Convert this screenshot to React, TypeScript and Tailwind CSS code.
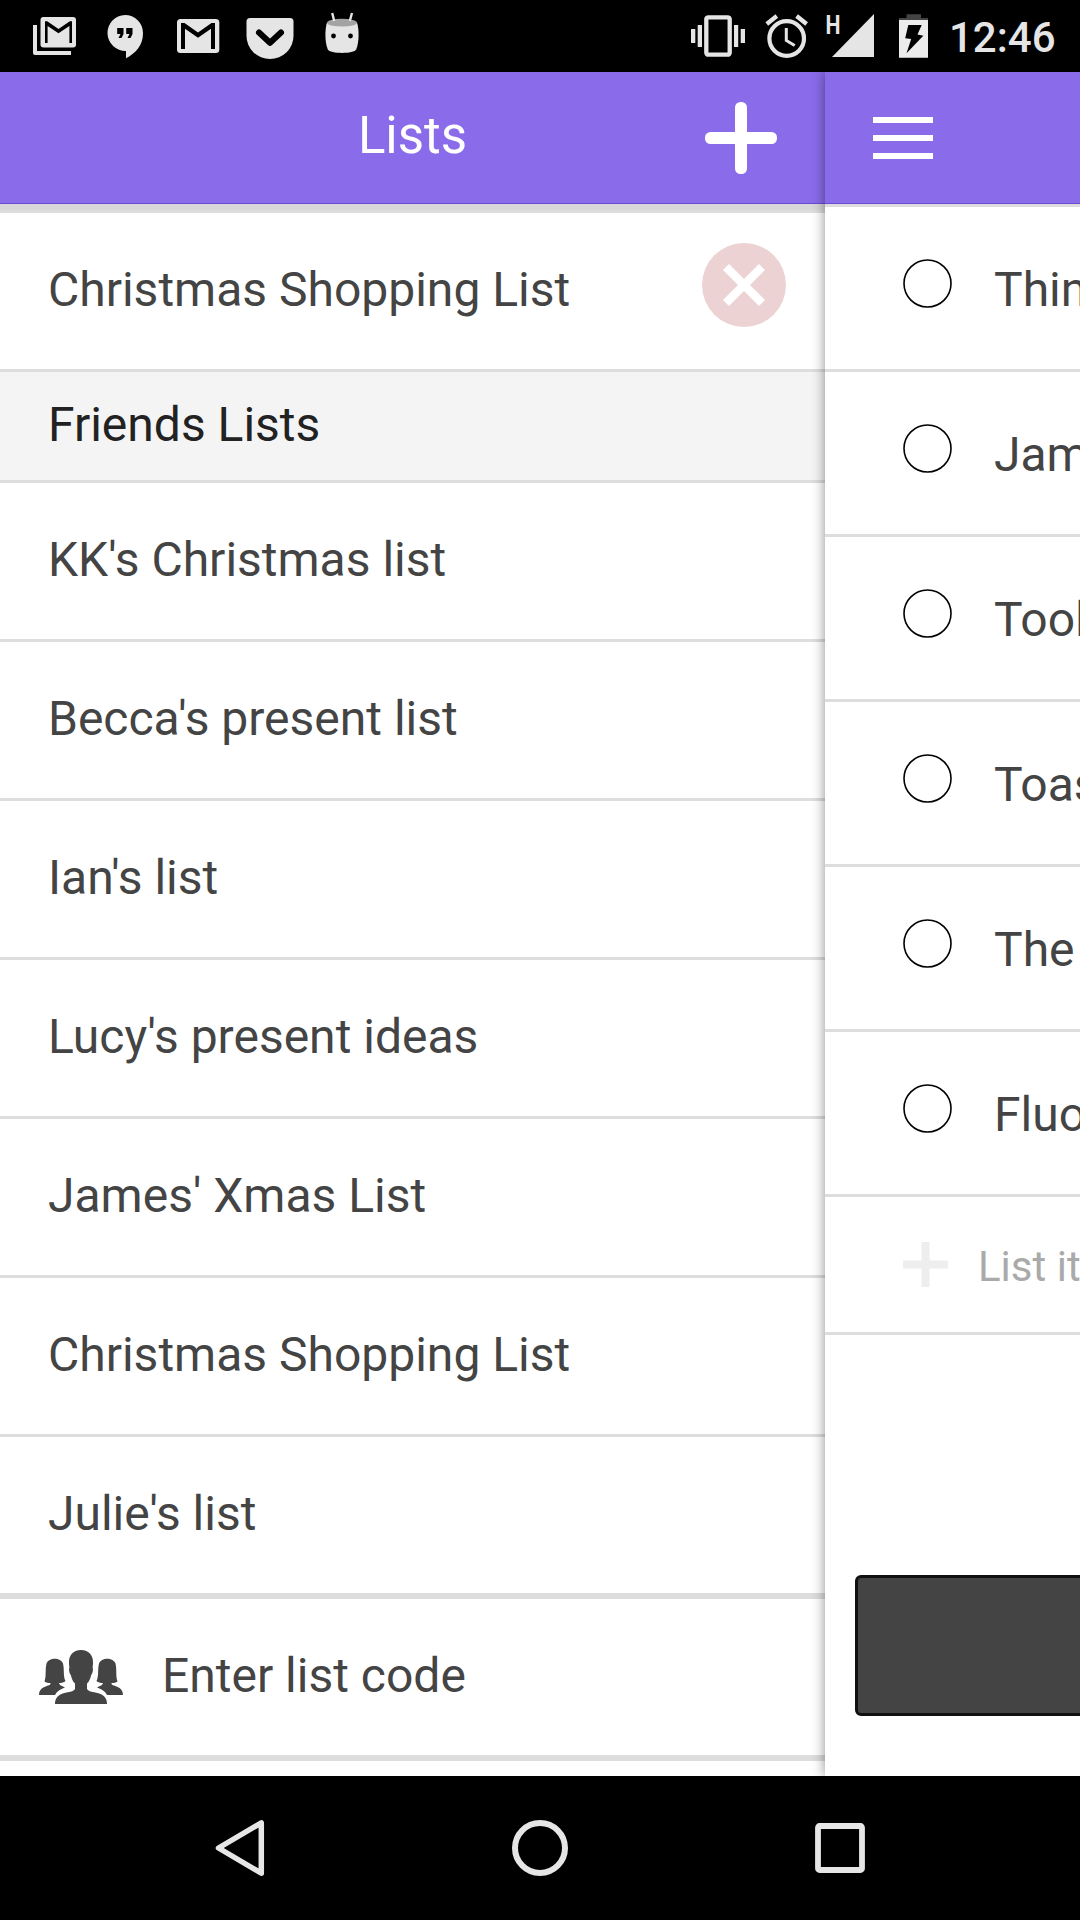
const friendLists = [
  "KK's Christmas list",
  "Becca's present list",
  "Ian's list",
  "Lucy's present ideas",
  "James' Xmas List",
  'Christmas Shopping List',
];

const items = ['Thin', 'Jam', 'Tool', 'Toas', 'The', 'Fluo'];

function StatusBar() {
  return (
    <div className="flex h-[72px] items-center bg-black pl-[30px] pr-6 text-[#e5e5e5]">
      <svg className="h-[72px] w-[50px]" viewBox="30 0 50 72">
        <path d="M33 25h4v26h34v4H35a2 2 0 0 1-2-2z" fill="currentColor" />
        <rect x="40.5" y="17" width="35.5" height="30.5" rx="3" fill="currentColor" />
        <path d="M45 43V21.2h2.2L58.5 29 69.8 21.2H72V43h-2.6V26L58.5 33.2 47.6 26V43z" fill="#000" />
      </svg>
      <svg className="ml-6 h-[72px] w-[44px]" viewBox="104 0 44 72">
        <path d="M125 15a18 18 0 1 0 1 36v7.3c10-5.300 17-13 17-25.300a18 18 0 0 0-18-18z" fill="currentColor" />
        <path d="M117.200 28h6.300v6l-2 4h-3l2-4h-3.300zM126.200 28h6.300v6l-2 4h-3l2-4h-3.300z" fill="#000" />
      </svg>
      <svg className="ml-6 h-[72px] w-[50px]" viewBox="172 0 50 72">
        <rect x="177" y="19" width="42.300" height="34" rx="3.500" fill="currentColor" />
        <path d="M181 49V23h3.500L198 32.500 211.500 23H215v26h-4V28.800L198 37.800 185 28.800V49z" fill="#000" />
      </svg>
      <svg className="ml-[18px] h-[72px] w-[60px]" viewBox="240 0 60 72">
        <path d="M250 18h40a3.500 3.500 0 0 1 3.500 3.500V36a23.500 23 0 0 1-47 0V21.500A3.500 3.500 0 0 1 250 18z" fill="currentColor" />
        <path d="M259 32.500l11 10.300 11-10.300" fill="none" stroke="#000" strokeWidth="6" strokeLinecap="round" strokeLinejoin="round" />
      </svg>
      <svg className="ml-5 h-[72px] w-[44px]" viewBox="320 0 44 72">
        <path d="M327 22.500c-2 6-2.500 19 .8 27 2 4.500 26.400 4.500 28.400 0 3.300-8 2.800-21 .8-27z" fill="currentColor" />
        <ellipse cx="342" cy="22.700" rx="15" ry="3.900" fill="#a3a3a3" />
        <path d="M334.200 21l-2-8M349.800 21l2.200-8" stroke="currentColor" strokeWidth="2.400" />
        <circle cx="333.500" cy="36" r="2.400" fill="#000" />
        <circle cx="350.500" cy="36" r="2.400" fill="#000" />
      </svg>
      <svg className="ml-auto h-[72px] w-[56px]" viewBox="690 0 56 72">
        <rect x="706.300" y="17.300" width="23.400" height="37.400" rx="2" fill="none" stroke="currentColor" strokeWidth="4.300" />
        <path d="M691 29h4.300v14H691zM697.700 25h4.300v22h-4.300zM734 25h4.200v22H734zM740.700 29h4.300v14h-4.300z" fill="currentColor" />
      </svg>
      <svg className="ml-[18px] h-[72px] w-[46px]" viewBox="764 0 46 72">
        <circle cx="786.700" cy="38.500" r="17.300" fill="none" stroke="currentColor" strokeWidth="4.200" />
        <path d="M786.300 28v12.500l8.400 5" fill="none" stroke="currentColor" strokeWidth="3" />
        <path d="M766.800 24l10-8M796.600 16l10 8" stroke="currentColor" strokeWidth="4.300" />
      </svg>
      <svg className="ml-3 h-[72px] w-[56px]" viewBox="822 0 56 72">
        <path d="M832 57l42-43v43z" fill="currentColor" />
        <text x="825.500" y="33.500" textLength="15" lengthAdjust="spacingAndGlyphs" fontSize="25.500" fontWeight="700" fill="currentColor">H</text>
      </svg>
      <svg className="ml-[18px] h-[72px] w-[34px]" viewBox="896 0 34 72">
        <path d="M906.500 14.300H921V18h7v2h-29v-2h7.500z" fill="#444" />
        <path d="M899 20h29v37.700h-29z" fill="#ececec" />
        <path d="M908.300 25h13.400L917.500 34.500l5.800 1.200-16.800 17.600 4.700-14.300-6-.8z" fill="#000" />
      </svg>
      <span className="ml-[19px] w-[107px] self-start whitespace-nowrap text-[42px] font-medium leading-[75px]">12:46</span>
    </div>
  );
}

function GroupIcon() {
  return (
    <svg className="h-[54px] w-[84px] text-[#444]" viewBox="0 0 84 54" fill="currentColor">
      <path d="M5.500 31.500C7.500 26 6 19 7.500 13.500 9.500 7 22 7 24 13.500c1.500 5.500 0 13 2.500 17.500-1.500 1.500-4 2-6.500 2 .5 2.500 3.500 3 6 4.500-4 1.500-8 3.500-10 7.500H0c.2-7 5.500-8 10-9.700 1.500-.6 1.500-1.200 1.500-2.300-2 0-4.500 0-6-1.500z" />
      <path d="M78.500 31.500C76.500 26 78 19 76.500 13.500 74.500 7 62 7 60 13.500c-1.500 5.500 0 13-2.500 17.500 1.500 1.500 4 2 6.500 2-.5 2.500-3.500 3-6 4.500 4 1.500 8 3.500 10 7.500H84c-.2-7-5.500-8-10-9.700-1.500-.6-1.500-1.200-1.500-2.300 2 0 4.500 0 6-1.500z" />
      <path d="M42 0c8 0 12.500 5.500 12 13.500l-.4 4.500c.8.400.2 5.500-1.400 7-1 4-2 6.500-4.200 8.500v5.500c2 3.500 8 2.500 13.500 5C66 46.200 68 49 68 54H16c0-5 2-7.800 6.500-10C28 41.500 34 42.500 36 39v-5.500c-2.200-2-3.200-4.500-4.200-8.500-1.600-1.500-2.200-6.600-1.400-7l-.4-4.500C29.500 5.500 34 0 42 0z" />
    </svg>
  );
}

function ListsPanel() {
  return (
    <section className="flex w-[825px] flex-none flex-col bg-white">
      <header className="flex h-[132px] items-center border-b border-[#7048d6] bg-[#8a6bea] pl-[120px] pr-12">
        <h1 className="flex-1 self-start text-center text-[51px] leading-[127px] text-white">Lists</h1>
        <svg className="mt-px h-[72px] w-[72px] flex-none" viewBox="0 0 72 72" fill="#fff">
          <rect x="30" width="12" height="72" rx="5.500" />
          <rect y="30" width="72" height="12" rx="5.500" />
        </svg>
      </header>
      <div className="h-1.5 bg-[#d8d8d8]" />
      <div className="h-[3px] bg-[#ddd]" />
      <div className="flex h-[159px] items-center justify-between border-b-[3px] border-[#ddd] pl-12 pr-[39px]">
        <span className="self-start leading-[153px]">Christmas Shopping List</span>
        <svg className="-mt-3 h-[84px] w-[84px]" viewBox="0 0 84 84">
          <circle cx="42" cy="42" r="42" fill="#ecd2d3" />
          <path d="M24 24l36 36M60 24L24 60" stroke="#fff" strokeWidth="8.500" />
        </svg>
      </div>
      <h2 className="h-[111px] border-b-[3px] border-[#ddd] bg-[#f4f4f4] pl-12 leading-[105px] text-[#222]">Friends Lists</h2>
      {friendLists.map((name) => (
        <div key={name} className="h-[159px] border-b-[3px] border-[#ddd] pl-12 leading-[153px]">{name}</div>
      ))}
      <div className="h-[162px] border-b-[6px] border-[#ddd] pl-12 leading-[153px]">Julie's list</div>
      <div className="flex h-[162px] items-center border-b-[6px] border-[#ddd] pl-[39px]">
        <GroupIcon />
        <span className="ml-[39px] self-start leading-[153px]">Enter list code</span>
      </div>
    </section>
  );
}

function ItemsPanel() {
  return (
    <section className="relative flex w-[255px] flex-none flex-col overflow-hidden bg-white shadow-[0_0_12px_rgba(0,0,0,0.45)]">
      <header className="h-[132px] border-b border-[#7048d6] bg-[#8a6bea] pl-12 pt-[45px]">
        <div className="flex w-[60px] flex-col gap-3">
          <div className="h-1.5 bg-white" />
          <div className="h-1.5 bg-white" />
          <div className="h-1.5 bg-white" />
        </div>
      </header>
      <div className="h-[3px] bg-[#ddd]" />
      {items.map((name) => (
        <div key={name} className="flex h-[165px] items-center whitespace-nowrap border-b-[3px] border-[#ddd] pl-[78px]">
          <svg className="mb-[9px] h-[49px] w-[49px] flex-none" viewBox="0 0 49 49">
            <circle cx="24.500" cy="24.500" r="23.500" fill="#fff" stroke="#000" strokeWidth="1.600" />
          </svg>
          <span className="ml-[42px] self-start leading-[165px]">{name}</span>
        </div>
      ))}
      <div className="flex h-[138px] items-center whitespace-nowrap border-b-[3px] border-[#ddd] pl-[78px] text-[42px] text-[#aaa]">
        <svg className="h-[45px] w-[45px] flex-none" viewBox="0 0 45 45">
          <path d="M18.500 0h8v18.500H45v8H26.500V45h-8V26.500H0v-8h18.500z" fill="#eee" />
        </svg>
        <span className="ml-[30px] self-start leading-[139px]">List item</span>
      </div>
      <div className="ml-[30px] mt-60 h-[141px] w-[300px] rounded-[6px] border-[3px] border-[#111] bg-[#444]" />
    </section>
  );
}

export default function App() {
  return (
    <div className="flex h-[1920px] w-[1080px] flex-col overflow-hidden bg-white font-['Roboto',sans-serif] text-[48px] text-[#444]">
      <StatusBar />
      <main className="flex h-[1704px] overflow-hidden">
        <ListsPanel />
        <ItemsPanel />
      </main>
      <nav className="flex h-36 items-center justify-between bg-black px-[210px] text-[#e6e6e6]">
        <svg className="h-[60px] w-[60px]" viewBox="0 0 60 60">
          <path d="M51.300 4.800v50.400L8.500 30z" fill="none" stroke="currentColor" strokeWidth="5.500" strokeLinejoin="round" />
        </svg>
        <svg className="h-[60px] w-[60px]" viewBox="0 0 60 60">
          <circle cx="30" cy="30" r="25" fill="none" stroke="currentColor" strokeWidth="6" />
        </svg>
        <svg className="h-[60px] w-[60px]" viewBox="0 0 60 60">
          <rect x="8" y="8" width="44" height="44" rx="1.500" fill="none" stroke="currentColor" strokeWidth="5.800" />
        </svg>
      </nav>
    </div>
  );
}
